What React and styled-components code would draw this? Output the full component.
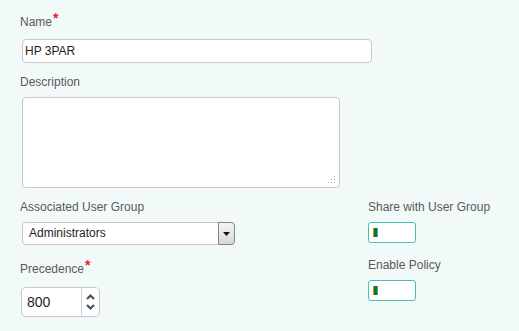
import React from "react";
import styled, { createGlobalStyle } from "styled-components";

const Global = createGlobalStyle`
  html, body { margin: 0; padding: 0; background: #f2f9f9; }
  body { font-family: "Liberation Sans", Arial, sans-serif; }
`;

const Page = styled.div`
  width: 519px;
  height: 331px;
  box-sizing: border-box;
  padding: 15px 0 0 20px;
  background: #f2f9f9;
  font-family: "Liberation Sans", Arial, sans-serif;
`;

const Label = styled.div`
  font-size: 12px;
  line-height: 14px;
  color: #5a5a5a;
  margin-top: ${(p) => p.$top || 0}px;
  white-space: nowrap;
`;

const Req = styled.span`
  color: #e8232b;
  font-size: 14px;
  font-weight: bold;
  line-height: 0;
  position: relative;
  top: -3px;
  margin-left: 1px;
`;

const TextInput = styled.input`
  display: block;
  box-sizing: border-box;
  margin: 10px 0 0 2px;
  width: 350px;
  height: 24px;
  padding: 0 2px;
  border: 1px solid #c8c8c8;
  border-radius: 4px;
  background: #fff;
  font-family: "Liberation Sans", Arial, sans-serif;
  font-size: 12px;
  color: #1e1e1e;
  outline: none;
`;

const AreaWrap = styled.div`
  position: relative;
  margin: 8px 0 0 2px;
  width: 318px;
  height: 91px;
`;

const Area = styled.textarea`
  display: block;
  box-sizing: border-box;
  width: 100%;
  height: 100%;
  border: 1px solid #c8c8c8;
  border-radius: 4px;
  background: #fff;
  resize: none;
  outline: none;
  font-family: "Liberation Sans", Arial, sans-serif;
  font-size: 12px;
`;

const Grip = styled.svg`
  position: absolute;
  right: 4px;
  bottom: 4px;
  width: 8px;
  height: 8px;
`;

const Bottom = styled.div`
  display: flex;
  margin-top: 12px;
`;

const LeftCol = styled.div`
  width: 348px;
  flex: none;
`;

const RightCol = styled.div`
  flex: 1;
`;

const SelectBox = styled.div`
  display: flex;
  box-sizing: border-box;
  margin: 8px 0 0 2px;
  width: 213px;
  height: 23px;
  border: 1px solid #c4c4c4;
  border-radius: 4px;
  background: #fff;
`;

const SelectValue = styled.span`
  flex: 1;
  padding-left: 6px;
  font-size: 12px;
  line-height: 21px;
  color: #1e1e1e;
`;

const SelectButton = styled.span`
  flex: none;
  display: flex;
  align-items: center;
  justify-content: center;
  box-sizing: border-box;
  width: 17px;
  margin: -1px -1px -1px 0;
  border: 1px solid #858585;
  border-radius: 0 4px 4px 0;
  background: linear-gradient(#f4f4f4, #d9d9d9);
`;

const Spinner = styled.div`
  display: flex;
  box-sizing: border-box;
  margin: 11px 0 0 1px;
  width: 79px;
  height: 30px;
  border: 1px solid #c8c8c8;
  border-radius: 5px;
  background: #fff;
`;

const SpinValue = styled.span`
  flex: 1;
  padding-left: 5px;
  font-size: 14px;
  line-height: 28px;
  color: #1e1e1e;
`;

const SpinButtons = styled.div`
  flex: none;
  width: 17px;
  border-left: 1px solid #d4d4d4;
  display: flex;
  flex-direction: column;
  align-items: center;
  justify-content: center;
  gap: 4px;
`;

const Toggle = styled.div`
  box-sizing: border-box;
  margin-top: 8px;
  width: 48px;
  height: 21px;
  border: 1px solid #4dbeb2;
  border-radius: 3px;
  background: #fff;
  padding: 5px 0 0 4px;
`;

const Thumb = styled.div`
  width: 5px;
  height: 9px;
  background: linear-gradient(90deg, #c39a28 0 1px, #137a14 1px 4px, #2ea3df 4px 5px);
`;

const Chevron = ({ up }) => (
  <svg width="9" height="6" viewBox="0 0 9 6">
    <path
      d={up ? "M1 5 L4.5 1.5 L8 5" : "M1 1 L4.5 4.5 L8 1"}
      fill="none"
      stroke="#3a5266"
      strokeWidth="2.1"
    />
  </svg>
);

export default function App() {
  return (
    <>
      <Global />
      <Page>
        <Label>
          Name<Req>*</Req>
        </Label>
        <TextInput defaultValue="HP 3PAR" />

        <Label $top={12}>Description</Label>
        <AreaWrap>
          <Area />
          <Grip viewBox="0 0 8 8">
            <g fill="#9a9a9a">
              <rect x="6" y="0" width="1" height="1" />
              <rect x="3" y="3" width="1" height="1" />
              <rect x="6" y="3" width="1" height="1" />
              <rect x="0" y="6" width="1" height="1" />
              <rect x="3" y="6" width="1" height="1" />
              <rect x="6" y="6" width="1" height="1" />
            </g>
          </Grip>
        </AreaWrap>

        <Bottom>
          <LeftCol>
            <Label>Associated User Group</Label>
            <SelectBox>
              <SelectValue>Administrators</SelectValue>
              <SelectButton>
                <svg width="7" height="4" viewBox="0 0 7 4">
                  <path d="M0 0 H7 L3.5 4 Z" fill="#111" />
                </svg>
              </SelectButton>
            </SelectBox>

            <Label $top={17}>
              Precedence<Req>*</Req>
            </Label>
            <Spinner>
              <SpinValue>800</SpinValue>
              <SpinButtons>
                <Chevron up />
                <Chevron />
              </SpinButtons>
            </Spinner>
          </LeftCol>

          <RightCol>
            <Label>Share with User Group</Label>
            <Toggle>
              <Thumb />
            </Toggle>
            <Label $top={15}>Enable Policy</Label>
            <Toggle>
              <Thumb />
            </Toggle>
          </RightCol>
        </Bottom>
      </Page>
    </>
  );
}
